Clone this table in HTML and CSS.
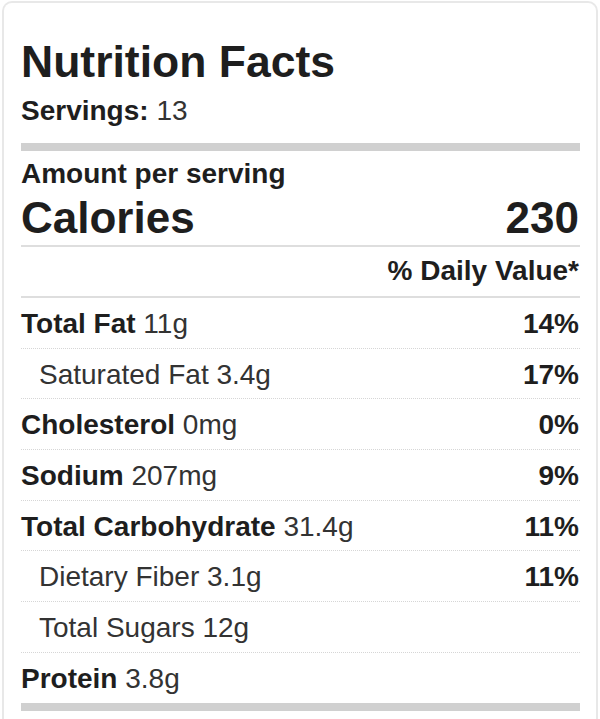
FILE: index.html
```html
<!DOCTYPE html>
<html lang="en">
<head>
<meta charset="utf-8">
<title>Nutrition Facts</title>
<link rel="stylesheet" href="styles.css">
</head>
<body>
<div class="label">
  <h2 class="title">Nutrition Facts</h2>
  <div class="servings"><b>Servings:</b> 13</div>
  <div class="bar"></div>
  <div class="amount">Amount per serving</div>
  <div class="calories"><span>Calories</span><span>230</span></div>
  <div class="dv-head">% Daily Value*</div>
  <div class="rows">
    <div class="row"><span><b>Total Fat</b> 11g</span><b>14%</b></div>
    <div class="row sub"><span>Saturated Fat 3.4g</span><b>17%</b></div>
    <div class="row"><span><b>Cholesterol</b> 0mg</span><b>0%</b></div>
    <div class="row"><span><b>Sodium</b> 207mg</span><b>9%</b></div>
    <div class="row"><span><b>Total Carbohydrate</b> 31.4g</span><b>11%</b></div>
    <div class="row sub"><span>Dietary Fiber 3.1g</span><b>11%</b></div>
    <div class="row sub"><span>Total Sugars 12g</span></div>
    <div class="row last"><span><b>Protein</b> 3.8g</span></div>
  </div>
  <div class="bar"></div>
</div>
</body>
</html>
```
FILE: styles.css
```css
html, body {
  margin: 0;
  padding: 0;
  background: #ffffff;
}
body {
  font-family: "Liberation Sans", Arial, sans-serif;
  color: #333333;
}
.label {
  margin: 1px 2px 0 2px;
  border: 2px solid #e8e8e8;
  border-bottom: none;
  border-radius: 10px 10px 0 0;
  padding: 34px 16px 20px 17px;
  height: 719px;
  box-sizing: border-box;
}
b {
  font-weight: bold;
  color: #1e1e1e;
}
.title {
  margin: 0;
  font-size: 44.5px;
  line-height: 50px;
  font-weight: bold;
  color: #1e1e1e;
}
.servings {
  margin-top: 8px;
  font-size: 28px;
  line-height: 32px;
}
.bar {
  height: 8px;
  background: #d0d0d0;
}
.servings + .bar {
  margin-top: 16px;
}
.amount {
  margin-top: 7px;
  font-size: 28px;
  line-height: 32px;
  font-weight: bold;
  color: #1e1e1e;
}
.calories {
  display: flex;
  justify-content: space-between;
  font-size: 44px;
  line-height: 48px;
  font-weight: bold;
  color: #1e1e1e;
  padding: 3.5px 1px 3.5px 0;
  border-bottom: 2px solid #dedede;
}
.dv-head {
  font-size: 28px;
  line-height: 32px;
  font-weight: bold;
  color: #1e1e1e;
  text-align: right;
  padding: 8px 1px 9px 0;
  border-bottom: 2px solid #dedede;
}
.row {
  display: flex;
  justify-content: space-between;
  font-size: 28px;
  line-height: 32px;
  padding: 10px 1px 7.7px 0;
  border-bottom: 1px dotted #d6d6d6;
}
.row.sub {
  padding-left: 18px;
}
.row.last {
  border-bottom: none;
}
```
